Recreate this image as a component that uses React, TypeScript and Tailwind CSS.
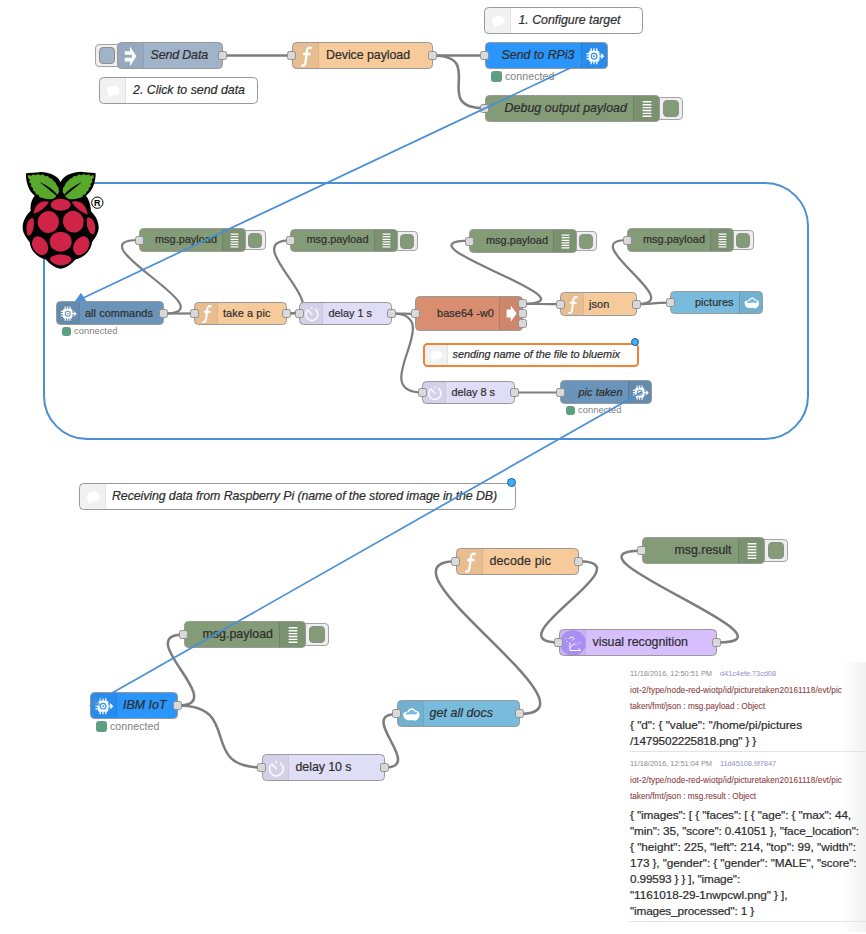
import { useLayoutEffect, useRef, useState, type ReactNode } from "react";

type IconKind = "inject" | "fn" | "chip" | "debug" | "comment" | "timer" | "exec" | "cloud" | "vision";

interface FlowNode {
  x: number;
  y: number;
  w: number;
  h: number;
  fill: string;
  icon: IconKind;
  side?: "left" | "right";
  label: string;
  labelX: number;
  labelW: number;
  small?: boolean;
  italic?: boolean;
  input?: boolean;
  outputs?: number;
  button?: "left" | "right";
  status?: boolean;
  changed?: boolean;
  selected?: boolean;
}

/** Single line of text whose tracking is computed so that it spans `width` pixels. */
function Fit({ width, className = "", children }: { width: number; className?: string; children: string }) {
  const ref = useRef<HTMLSpanElement>(null);
  const [spacing, setSpacing] = useState(0);
  useLayoutEffect(() => {
    if (!ref.current) return;
    const natural = ref.current.getBoundingClientRect().width;
    setSpacing((width - natural) / children.length);
  }, [width, children]);
  return (
    <span ref={ref} className={"inline-block whitespace-pre " + className} style={{ letterSpacing: spacing }}>
      {children}
    </span>
  );
}

function Icon({ kind, size, fill }: { kind: IconKind; size: number; fill: string }) {
  const shapes: Record<IconKind, ReactNode> = {
    inject: (
      <g fill="#fff">
        <path d="M6.8 8.2H12V3.4L18.4 13.3L12 23.2V18.4H6.8V14.8H14V11.8H6.8Z" />
      </g>
    ),
    fn: (
      <path
        d="M18.8 5.2C15.6 3.6 14.2 5.4 13.8 8.4L12.6 18.6C12.2 22 11 23.3 8.4 22.1M10 11H17.6"
        fill="none"
        stroke="#fff"
        strokeWidth="2.3"
      />
    ),
    chip: (
      <g stroke="#fff" strokeWidth="1.3" fill="none">
        <path d="M9.2 5.2V21.2M12 5.2V21.2M14.8 5.2V21.2M4.4 10.6H8M4.4 13.2H8M4.4 15.8H8M16 13.2H20.8" />
        <rect x="7.4" y="8.4" width="9.4" height="9.6" rx="1.2" fill="#fff" />
        <path d="M19 10.8L21.4 13.2L19 15.6" />
        <circle cx="12.1" cy="13.2" r="2.8" stroke={fill} strokeWidth="1.2" />
        <circle cx="12.1" cy="13.2" r="0.9" fill={fill} stroke="none" />
      </g>
    ),
    debug: <path d="M8.6 5.8H17.4M8.6 8.7H17.4M8.6 11.6H17.4M8.6 14.5H17.4M8.6 17.4H17.4M8.6 20.3H17.4" stroke="#fff" strokeWidth="1.4" />,
    comment: <path d="M13.4 7.8C17.2 7.8 19.7 9.9 19.7 12.7C19.7 15.9 16 17.9 12 17.2C10.8 18.9 9.1 19.4 7.4 19.1C8.4 18.4 8.8 17.4 8.6 16.3C5 13.2 7.4 7.8 13.4 7.8Z" fill="#fff" />,
    timer: (
      <g fill="none" stroke="#fff" strokeWidth="1.7" opacity=".85" strokeLinecap="round">
        <path d="M17.4 8.4A6.9 6.9 0 1 1 7.9 9.8M13.4 13.8L9 9.2" />
        <path d="M13.2 6.4V7.4" />
      </g>
    ),
    exec: <path d="M7.4 8.6H12.2V4L18.8 13L12.2 22.2V17.6H7.4Z" fill="#fff" />,
    cloud: (
      <g>
        <path d="M5.2 13.2C5.4 10.8 8.6 10.6 9.6 10.4C11.2 6.4 16.4 6.4 17.6 9.8C21.6 9.6 22.6 15 20.4 17.2C19 20 15.8 19.8 14.4 18.9C10.6 20 5.2 19 5.2 13.2Z" fill="#fff" />
        <path d="M7.4 13C9 13.7 12 13.8 14 12.9C15.8 13.7 18.4 13.6 19.4 12.6C19.4 10.9 17.8 10.6 16.8 11C15.6 8.1 12.2 8 10.6 11.3C9 11.2 7.8 11.8 7.4 13Z" fill={fill} />
      </g>
    ),
    vision: (
      <g fill="none" stroke="#fff" strokeWidth="1">
        <circle cx="13" cy="13" r="12.8" fill="#a98ff3" stroke="none" />
        <path d="M10 12.4V20.5H20.5L18.4 18.2M10 17.8L14 13.6L15.6 15.2M8.8 8.8L10.4 7.4L12.6 7L14 8.6L12.2 10.6" />
        <path d="M5.6 8V9.4M7 11V12.2M15.6 12.2L17 13.4M18 14.4L20.6 11.6" strokeDasharray="1 1" />
      </g>
    ),
  };
  return (
    <svg width={size} height={size} viewBox="0 0 26 26" className="block shrink-0">
      {shapes[kind]}
    </svg>
  );
}

const BLUE = "#2a95fb";
const GREEN = "#839b77";
const PEACH = "#f6ca9a";
const LILAC = "#e0ddf6";
const STEEL = "#6a94b9";
const SKY = "#79bbdd";

const nodes: FlowNode[] = [
  { x: 117, y: 42, w: 106, h: 27, fill: "#a0b3c9", icon: "inject", label: "Send Data", labelX: 150.5, labelW: 57.5, italic: true, outputs: 1, button: "left" },
  { x: 99, y: 77, w: 159, h: 27, fill: "#ffffff", icon: "comment", label: "2. Click to send data", labelX: 133, labelW: 112, italic: true },
  { x: 292, y: 42, w: 141, h: 27, fill: PEACH, icon: "fn", label: "Device payload", labelX: 326, labelW: 84, input: true, outputs: 1 },
  { x: 484, y: 7, w: 159, h: 27, fill: "#ffffff", icon: "comment", label: "1. Configure target", labelX: 518.5, labelW: 102, italic: true },
  { x: 485, y: 42, w: 123, h: 27, fill: BLUE, icon: "chip", side: "right", label: "Send to RPi3", labelX: 501.5, labelW: 73, italic: true, input: true, status: true },
  { x: 485, y: 95, w: 175, h: 27, fill: GREEN, icon: "debug", side: "right", label: "Debug output payload", labelX: 504.5, labelW: 122.5, italic: true, input: true, button: "right" },

  { x: 139, y: 228, w: 107, h: 24, fill: GREEN, icon: "debug", side: "right", label: "msg.payload", labelX: 155, labelW: 62, small: true, input: true, button: "right" },
  { x: 290, y: 229, w: 108, h: 23, fill: GREEN, icon: "debug", side: "right", label: "msg.payload", labelX: 306.5, labelW: 62, small: true, input: true, button: "right" },
  { x: 469, y: 229, w: 108, h: 24, fill: GREEN, icon: "debug", side: "right", label: "msg.payload", labelX: 486, labelW: 62, small: true, input: true, button: "right" },
  { x: 627, y: 228, w: 107, h: 24, fill: GREEN, icon: "debug", side: "right", label: "msg.payload", labelX: 643, labelW: 62, small: true, input: true, button: "right" },
  { x: 56, y: 301, w: 108, h: 24, fill: STEEL, icon: "chip", label: "all commands", labelX: 85, labelW: 68, small: true, outputs: 1, status: true },
  { x: 194, y: 302, w: 93, h: 23, fill: PEACH, icon: "fn", label: "take a pic", labelX: 223, labelW: 47.5, small: true, input: true, outputs: 1 },
  { x: 299, y: 302, w: 93, h: 23, fill: LILAC, icon: "timer", label: "delay 1 s", labelX: 328.5, labelW: 43.5, small: true, input: true, outputs: 1 },
  { x: 415, y: 296, w: 108, h: 35, fill: "#d98e72", icon: "exec", side: "right", label: "base64 -w0", labelX: 437, labelW: 57, small: true, input: true, outputs: 3 },
  { x: 560, y: 292, w: 77, h: 24, fill: PEACH, icon: "fn", label: "json", labelX: 589, labelW: 20.5, small: true, input: true, outputs: 1 },
  { x: 670, y: 291, w: 93, h: 23, fill: SKY, icon: "cloud", side: "right", label: "pictures", labelX: 695, labelW: 38.5, small: true, input: true },
  { x: 423, y: 343, w: 216, h: 24, fill: "#ffffff", icon: "comment", label: "sending name of the file to bluemix", labelX: 452.5, labelW: 167.5, small: true, italic: true, changed: true, selected: true },
  { x: 422, y: 381, w: 93, h: 23, fill: LILAC, icon: "timer", label: "delay 8 s", labelX: 451.5, labelW: 43.5, small: true, input: true, outputs: 1 },
  { x: 560, y: 380, w: 92, h: 24, fill: STEEL, icon: "chip", side: "right", label: "pic taken", labelX: 578.5, labelW: 44, small: true, italic: true, input: true, status: true },

  { x: 79, y: 483, w: 437, h: 27, fill: "#ffffff", icon: "comment", label: "Receiving data from Raspberry Pi (name of the stored image in the DB)", labelX: 112, labelW: 385, italic: true, changed: true },
  { x: 184, y: 621, w: 122, h: 27, fill: GREEN, icon: "debug", side: "right", label: "msg.payload", labelX: 202.5, labelW: 70.5, input: true, button: "right" },
  { x: 90, y: 692, w: 88, h: 27, fill: BLUE, icon: "chip", label: "IBM IoT", labelX: 123, labelW: 43.5, italic: true, outputs: 1, status: true },
  { x: 262, y: 754, w: 123, h: 27, fill: LILAC, icon: "timer", label: "delay 10 s", labelX: 295.5, labelW: 56, input: true, outputs: 1 },
  { x: 397, y: 700, w: 123, h: 27, fill: SKY, icon: "cloud", label: "get all docs", labelX: 429.5, labelW: 63.5, italic: true, input: true, outputs: 1 },
  { x: 456, y: 548, w: 123, h: 27, fill: PEACH, icon: "fn", label: "decode pic", labelX: 489.5, labelW: 61.5, input: true, outputs: 1 },
  { x: 559, y: 629, w: 158, h: 27, fill: "#d7bffe", icon: "vision", label: "visual recognition", labelX: 592.5, labelW: 95.5, input: true, outputs: 1 },
  { x: 642, y: 537, w: 123, h: 27, fill: GREEN, icon: "debug", side: "right", label: "msg.result", labelX: 674.5, labelW: 57, input: true, button: "right" },
];

function Port({ x, y }: { x: number; y: number }) {
  return (
    <div
      className="absolute size-[9px] rounded-[2.5px] border border-[#8f8f8f] bg-[#d9d9d9]"
      style={{ left: x - 4.5, top: y - 4.5 }}
    />
  );
}

function NodeView({ node: n }: { node: FlowNode }) {
  const iconW = n.small ? 23 : 26;
  const right = n.side === "right";
  const outputs = n.outputs ?? 0;
  const raised = n.small && (n.icon === "debug" || n.icon === "comment");
  return (
    <div className="absolute" style={{ left: n.x, top: n.y, width: n.w, height: n.h }}>
      {n.button && (
        <div
          className={
            "absolute flex items-center rounded-[4px] border border-[#a3a3a3] bg-[#eeeeee] " +
            (n.button === "right" ? "justify-end pr-[3px] " : "pl-[3px] ") +
            (n.small ? "top-[2px] h-[20px] w-[28px] " : "top-[2px] h-[23px] w-[30px] ") +
            (n.button === "right" ? (n.small ? "-right-[20px]" : "-right-[23px]") : "-left-[22px]")
          }
        >
          <div
            className={"rounded-[4px] border border-[#8e8e8e] " + (n.small ? "h-[15px] w-[14px]" : "h-[17px] w-[16px]")}
            style={{ backgroundColor: n.fill }}
          />
        </div>
      )}
      <div
        className={
          "relative flex h-full overflow-hidden rounded-[4.5px] " +
          (n.selected ? "border-2 border-[#f08336] " : "border border-[#999999] ") +
          (right ? "flex-row-reverse" : "")
        }
        style={{ backgroundColor: n.fill }}
      >
        <div
          className={
            "flex shrink-0 items-center justify-center bg-black/[0.055] " +
            (right ? "border-l border-black/10" : "border-r border-black/5")
          }
          style={{ width: iconW }}
        >
          <Icon kind={n.icon} size={iconW} fill={n.fill} />
        </div>
      </div>
      <div
        className={
          "absolute top-0 flex h-full items-center text-[#2d2d2d] [-webkit-text-stroke:0.2px_#2d2d2d] " +
          (n.small ? "text-[10.9px] " : "text-[12.4px] ") +
          (n.italic ? "italic " : "") +
          (raised ? "pb-[2px]" : "")
        }
        style={{ left: n.labelX - n.x }}
      >
        <Fit width={n.labelW}>{n.label}</Fit>
      </div>
      {n.input && <Port x={n.small ? 0.5 : -0.5} y={n.h / 2} />}
      {Array.from({ length: outputs }, (_, i) => (
        <Port key={i} x={n.w - 0.5} y={n.h / 2 + (i - (outputs - 1) / 2) * 10} />
      ))}
      {n.changed && (
        <div
          className={
            "absolute rounded-full border border-[#1c6291] bg-[#3cb0f5] " +
            (n.small ? "-top-[5px] right-0 size-[8px]" : "-top-[5px] right-0 size-[9px]")
          }
        />
      )}
      {n.status && (
        <div
          className={
            "absolute top-full flex items-center text-[#808080] " +
            (n.small ? "left-[6px] mt-[2px] h-[9px] gap-[3px] text-[9.3px]" : "left-[6px] mt-[2px] h-[11px] gap-[3px] text-[10.6px]")
          }
        >
          <i className={"block shrink-0 rounded-[3px] bg-[#5d9f80] " + (n.small ? "size-[9px]" : "size-[11px]")} />
          <Fit width={n.small ? 43.5 : 49.5}>connected</Fit>
        </div>
      )}
    </div>
  );
}

/** Wire between two ports, curved in proportion to their distance. */
function wire(x1: number, y1: number, x2: number, y2: number, unit: number) {
  const nodeW = 100 * unit;
  const nodeH = 30 * unit;
  const dx = x2 - x1;
  const dy = y2 - y1;
  const delta = Math.hypot(dx, dy);
  let scale = 0.75;
  let scaleY = 0;
  if (delta < nodeW) scale = 0.75 - 0.75 * ((nodeW - delta) / nodeW);
  if (dx < 0) {
    scale += 2 * (Math.min(5 * nodeW, Math.abs(dx)) / (5 * nodeW));
    if (Math.abs(dy) < 3 * nodeH) {
      scaleY = (dy > 0 ? 0.5 : -0.5) * ((3 * nodeH - Math.abs(dy)) / (3 * nodeH)) * (Math.min(nodeW, Math.abs(dx)) / nodeW);
    }
  }
  return `M${x1} ${y1}C${x1 + scale * nodeW} ${y1 + scaleY * nodeH} ${x2 - scale * nodeW} ${y2 - scaleY * nodeH} ${x2} ${y2}`;
}

const wires: [number, number, number, number, number][] = [
  [222.5, 55.5, 292.5, 55.5, 0.88],
  [432.5, 55.5, 485, 55.5, 0.88],
  [432.5, 55.5, 485, 108.3, 0.88],
  [163.7, 313.5, 194, 313.5, 0.77],
  [163.7, 313.5, 139, 240, 0.77],
  [286.5, 313.5, 299.5, 313.5, 0.77],
  [286.5, 313.5, 290.5, 240.3, 0.77],
  [391.7, 313.5, 415.5, 313.8, 0.77],
  [391.7, 313.5, 422.5, 392.5, 0.77],
  [523, 303.8, 560.3, 304.2, 0.77],
  [523, 303.8, 469.5, 240.7, 0.77],
  [637, 304.2, 670.5, 302.7, 0.77],
  [637, 304.2, 627, 240, 0.77],
  [514.5, 392.5, 560, 392.5, 0.77],
  [178, 705.5, 184, 634.5, 0.88],
  [178, 705.5, 262.5, 767.5, 0.88],
  [384.5, 767.5, 397, 714, 0.88],
  [519.5, 714, 456.5, 561.3, 0.88],
  [578.7, 561.3, 559.5, 642.5, 0.88],
  [716.7, 642.5, 642.5, 550.8, 0.88],
];

function RaspberryLogo() {
  return (
    <svg className="absolute left-[20px] top-[170px] h-[100px] w-[90px]" viewBox="30 30 270 300">
      <path
        d="M152 66C140 42 110 37 93 36C75 39 58 38 48 40C47 66 56 92 74 107C64 119 60 136 62 152C48 166 37 185 38 204C39 222 50 234 59 247C62 272 80 291 106 298C120 311 132 324 152 326C172 324 184 311 198 298C224 291 243 272 246 247C256 232 266 220 266 202C266 184 257 168 243 154C242 136 238 119 228 107C248 94 257 66 257 40C242 37 228 37 213 35C190 37 163 42 152 66Z"
        fill="#000"
      />
      <g fill="#58a92c">
        <path d="M54 45L64 47L69 43L77 46L84 42L91 46L99 43L105 49L114 48L118 54L126 56L130 62L137 68L141 77L146 84L147 96C141 105 139 113 127 117C112 120 99 114 88 111L86 105L77 102L76 96L69 91L69 84L62 79L64 72L57 66L60 59L54 54Z" />
        <path d="M251 45L241 47L236 43L228 46L221 42L214 46L206 43L200 49L191 48L187 54L179 56L175 62L168 68L164 77L159 84L158 96C164 105 166 113 178 117C193 120 206 114 217 111L219 105L228 102L229 96L236 91L236 84L243 79L241 72L248 66L245 59L251 54Z" />
      </g>
      <path d="M150 94C146 106 140 116 128 120H176C164 116 158 106 154 94Z" fill="#000" />
      <path d="M144 106C131 90 113 76 88 65L141 109ZM161 106C174 90 192 76 217 65L164 109Z" fill="#000" />
      <g fill="#cf2347">
        <ellipse cx="152" cy="134" rx="30" ry="18" />
        <path d="M117 125C95 119 74 131 71 161C86 157 107 143 117 125Z" />
        <path d="M185 125C207 119 229 131 233 164C218 158 195 144 185 125Z" />
        <ellipse cx="115" cy="186" rx="32" ry="33" transform="rotate(25 115 186)" />
        <ellipse cx="190" cy="185" rx="31" ry="33" transform="rotate(-25 190 185)" />
        <path d="M69 173C51 176 45 203 53 226C67 232 77 191 69 173Z" />
        <path d="M233 172C250 173 261 196 253 221C239 231 224 191 233 172Z" />
        <ellipse cx="152" cy="245" rx="33" ry="30" />
        <ellipse cx="90" cy="257" rx="22" ry="30" transform="rotate(-32 90 257)" />
        <ellipse cx="214" cy="257" rx="22" ry="30" transform="rotate(32 214 257)" />
        <path d="M119 297C126 279 178 279 185 297C180 314 160 316 152 316C143 316 124 311 119 297Z" />
      </g>
      <circle cx="262" cy="128" r="17" fill="#fff" stroke="#000" strokeWidth="3" />
      <text x="262" y="138" textAnchor="middle" fontSize="27" fontWeight="700" fontFamily="Liberation Sans, sans-serif">
        R
      </text>
    </svg>
  );
}

interface Message {
  time: string;
  id: string;
  topic: [string, number][];
  body: [string, number][];
}

const messages: Message[] = [
  {
    time: "11/18/2016, 12:50:51 PM",
    id: "d41c4efe.73cd08",
    topic: [
      ["iot-2/type/node-red-wiotp/id/picturetaken20161118/evt/pic", 212],
      ["taken/fmt/json : msg.payload : Object", 135],
    ],
    body: [
      ['{ "d": { "value": "/home/pi/pictures', 172],
      ['/1479502225818.png" } }', 126],
    ],
  },
  {
    time: "11/18/2016, 12:51:04 PM",
    id: "11d45108.9f7847",
    topic: [
      ["iot-2/type/node-red-wiotp/id/picturetaken20161118/evt/pic", 212],
      ["taken/fmt/json : msg.result : Object", 126],
    ],
    body: [
      ['{ "images": [ { "faces": [ { "age": { "max": 44,', 221],
      ['"min": 35, "score": 0.41051 }, "face_location":', 229],
      ['{ "height": 225, "left": 214, "top": 99, "width":', 226],
      ['173 }, "gender": { "gender": "MALE", "score":', 226.5],
      ['0.99593 } } ], "image":', 110],
      ['"1161018-29-1nwpcwl.png" } ],', 157.5],
      ['"images_processed": 1 }', 124],
    ],
  },
];

function DebugPanel() {
  return (
    <aside className="absolute left-[629px] top-[662px] flex h-[270px] w-[237px] flex-col bg-linear-to-r from-white from-90% to-[#f1f1f1]">
      {messages.map((m) => (
        <section key={m.id} className="flex flex-col border-b border-[#e4e4e4] pb-px pl-px pt-[6px]">
          <div className="flex h-[12px] items-center gap-[8px] text-[7.4px]">
            <Fit width={82} className="text-[#8c8c8c]">{m.time}</Fit>
            <Fit width={56} className="text-[#9090c4]">{m.id}</Fit>
          </div>
          <div className="mt-[2px] flex flex-col pt-px text-[8.2px] text-[#8b4545] [-webkit-text-stroke:0.1px_#8b4545]">
            {m.topic.map(([t, w]) => (
              <div key={t} className="flex h-[16px] items-center">
                <Fit width={w}>{t}</Fit>
              </div>
            ))}
          </div>
          <div className="mt-[3px] flex flex-col text-[11.8px] text-[#2b2b2b] [-webkit-text-stroke:0.2px_#2b2b2b]">
            {m.body.map(([t, w]) => (
              <div key={t} className="flex h-[16px] items-center">
                <Fit width={w}>{t}</Fit>
              </div>
            ))}
          </div>
        </section>
      ))}
    </aside>
  );
}

export default function App() {
  return (
    <main className="relative h-[934px] w-[866px] overflow-hidden bg-white font-['Liberation_Sans',Arial,sans-serif] leading-none">
      <div className="absolute left-[43px] top-[182px] h-[258px] w-[766px] rounded-[44px] border-2 border-[#4a8fd1]" />
      <svg className="absolute inset-0" width="866" height="934" fill="none" stroke="#7d7d7d">
        {wires.map(([x1, y1, x2, y2, unit], i) => (
          <path key={i} d={wire(x1, y1, x2, y2, unit)} strokeWidth={2.9 * unit} />
        ))}
      </svg>
      {nodes.map((n, i) => (
        <NodeView key={i} node={n} />
      ))}
      <RaspberryLogo />
      <svg className="absolute inset-0" width="866" height="934" fill="none" stroke="#4a8fd5" strokeWidth="1.7">
        <path d="M583 62L82 298.4" />
        <path d="M74.5 301.8L81 292.7L86.3 301.2Z" fill="#4a8fd5" stroke="none" />
        <path d="M642 392L112 693" />
        <path d="M112 693L98 701" opacity=".5" />
        <path d="M89 706.4L95.5 696.5L100.6 705.2Z" fill="#4a8fd5" stroke="none" opacity=".8" />
      </svg>
      <DebugPanel />
    </main>
  );
}
